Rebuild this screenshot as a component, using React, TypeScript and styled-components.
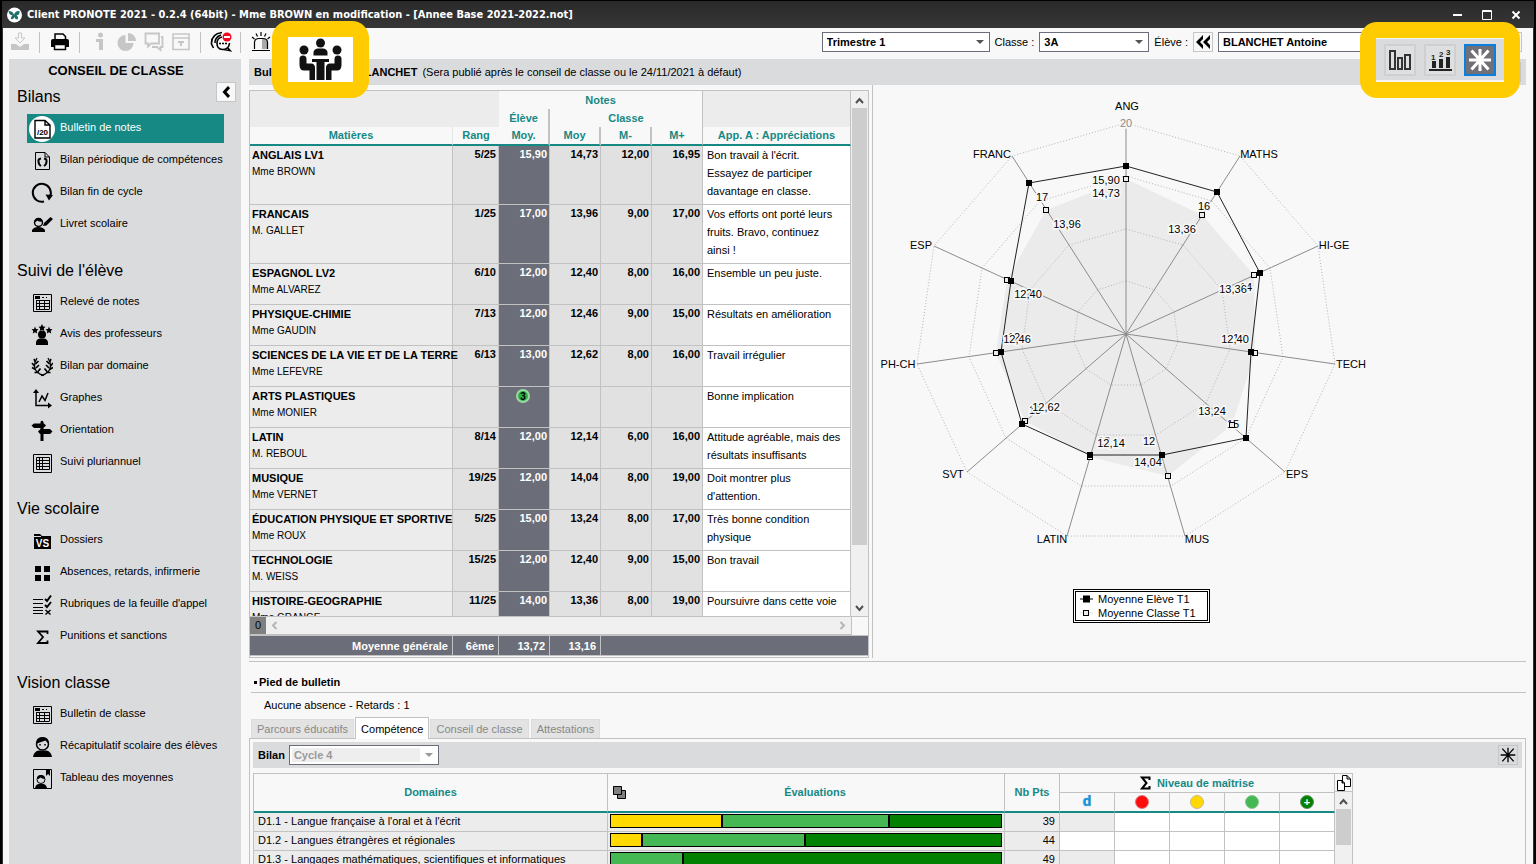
import React from 'react';
import styled, { createGlobalStyle, css } from 'styled-components';

const teal = '#168985';
const line = '#c2c2c2';
const panel = '#dadbdd';
const paper = '#f8f8f8';
const slate = '#6b6e78';

const GlobalStyle = createGlobalStyle`
  *, *::before, *::after { box-sizing: border-box; }
  html, body { margin: 0; height: 100%; overflow: hidden; }
  body {
    background: #000;
    color: #000;
    font-family: "Liberation Sans", Arial, sans-serif;
    font-size: 11px;
    line-height: 18px;
  }
  button, select { font: inherit; color: inherit; }
  svg { display: block; flex: none; }
`;

/* ---------- window frame ---------- */

const Window = styled.div`
  position: relative;
  display: flex;
  flex-direction: column;
  height: 100vh;
  border: solid #000;
  border-width: 1px 2px 0;
`;

const TitleBar = styled.header`
  display: flex;
  flex: none;
  align-items: center;
  justify-content: space-between;
  height: 27px;
  padding: 0 12px 0 5px;
  background: linear-gradient(#2a2a2a, #363636);
  color: #fff;
`;

const Title = styled.h1`
  display: flex;
  align-items: center;
  gap: 5px;
  margin: 0;
  font: bold 11px/18px "DejaVu Sans Condensed", "DejaVu Sans", sans-serif;
  white-space: nowrap;
`;

const WindowButtons = styled.div`
  display: flex;
  gap: 17px;
`;

const WindowButton = styled.button`
  padding: 0;
  border: 0;
  background: none;
`;

const Frame = styled.div`
  display: flex;
  flex: 1;
  flex-direction: column;
  min-height: 0;
  border: solid #333;
  border-width: 0 1px;
  background: ${paper};
`;

/* ---------- toolbar ---------- */

const Toolbar = styled.div`
  display: flex;
  flex: none;
  align-items: center;
  height: 31px;
  padding: 0 11px 3px 3px;
`;

const ToolButton = styled.button`
  display: flex;
  align-items: center;
  justify-content: center;
  width: 27px;
  height: 24px;
  padding: 0;
  border: 0;
  background: none;
  color: #000;
  &:disabled { color: #c6c6c6; }
`;

const ToolSeparator = styled.span`
  width: 1px;
  height: 21px;
  margin: 0 6px;
  background: #c2c2c2;
`;

const Filters = styled.div`
  display: flex;
  align-items: center;
  gap: 5px;
  margin-left: auto;
`;

const SelectBox = styled.span<{ $w: number; $disabled?: boolean }>`
  position: relative;
  display: block;
  width: ${p => p.$w}px;
  height: 20px;
  border: 1px solid ${slate};
  background: #fff;
  ${p => p.$disabled && css`padding: 2px;`}
  &::after {
    content: '';
    position: absolute;
    top: 7px;
    right: 5px;
    border: solid transparent;
    border-width: 4px 4px 0;
    border-top-color: ${p => (p.$disabled ? '#999' : '#555')};
  }
`;

const Select = styled.select`
  display: block;
  width: 100%;
  height: 100%;
  padding: 0 16px 0 4px;
  border: 0;
  background: none;
  font-weight: bold;
  line-height: 14px;
  appearance: none;
  &:disabled {
    width: calc(100% - 16px);
    padding-left: 2px;
    background: #eee;
    color: #999;
    opacity: 1;
  }
`;

const SmallButton = styled.button<{ $flat?: boolean }>`
  display: flex;
  flex: none;
  align-items: center;
  justify-content: center;
  width: 20px;
  height: 20px;
  padding: 0;
  border: 1px solid #c6c6c6;
  background: ${p => (p.$flat ? panel : paper)};
`;

/* ---------- sidebar ---------- */

const Main = styled.div`
  display: flex;
  flex: 1;
  gap: 8px;
  min-height: 0;
  padding: 0 7px 0 6px;
`;

const Sidebar = styled.nav`
  position: relative;
  flex: none;
  width: 232px;
  background: ${panel};
`;

const SidebarTitle = styled.h2`
  margin: 0 18px 0 0;
  font-size: 13px;
  line-height: 24px;
  text-align: center;
`;

const CollapseSlot = styled.div`
  position: absolute;
  top: 23px;
  right: 5px;
`;

const Section = styled.section`
  margin-bottom: 18px;
`;

const SectionTitle = styled.h3`
  margin: 0;
  padding-left: 8px;
  font-size: 16px;
  font-weight: normal;
  line-height: 28px;
`;

const NavItem = styled.a<{ $active?: boolean }>`
  display: flex;
  align-items: center;
  gap: 3px;
  width: 197px;
  height: 29px;
  margin: 3px 0 0 18px;
  color: ${p => (p.$active ? '#fff' : '#000')};
  background: ${p => (p.$active ? teal : 'transparent')};
  text-decoration: none;
  white-space: nowrap;
`;

const NavIcon = styled.span<{ $active?: boolean }>`
  display: flex;
  align-items: center;
  justify-content: center;
  width: 26px;
  height: 26px;
  margin: 0 2px;
  border-radius: 50%;
  color: #000;
  background: ${p => (p.$active ? '#fff' : 'transparent')};
`;

const NavLabel = styled.span`
  padding-bottom: 3px;
`;

/* ---------- content ---------- */

const Content = styled.main`
  display: flex;
  flex: 1;
  flex-direction: column;
  min-width: 0;
`;

const ContentHeader = styled.div`
  display: flex;
  flex: none;
  align-items: center;
  gap: 5px;
  height: 26px;
  padding: 0 5px;
  background: ${panel};
  white-space: nowrap;
`;

const PushRight = styled.span`
  margin-left: auto;
`;

const Split = styled.div`
  display: flex;
  flex: none;
  padding-bottom: 3px;
  border-bottom: 1px solid ${line};
`;

const GradesPane = styled.div`
  flex: none;
  width: 624px;
  padding: 5px 3px 0 0;
  border-right: 1px solid ${line};
`;

const GradesBox = styled.div`
  border: 1px solid ${line};
`;

const GradesScroll = styled.div`
  display: flex;
  height: 526px;
  overflow: hidden;
  border-bottom: 1px solid ${line};
`;

const Grid = styled.table`
  flex: none;
  align-self: flex-start;
  border-spacing: 0;
  table-layout: fixed;
  width: 0;
`;

const GroupHead = styled.th<{ $shade?: boolean; $rule?: boolean; $edge?: boolean }>`
  height: 18px;
  padding: 0;
  border-right: ${p => (p.$rule ? `2px solid ${line}` : p.$edge ? `1px solid ${line}` : '0')};
  background: ${p => (p.$shade ? '#ececec' : paper)};
  color: ${teal};
`;

const ColumnHead = styled.th<{ $rule?: 'soft' | 'hard' | 'thin' }>`
  height: 19px;
  padding: 0;
  border-bottom: 2px solid ${teal};
  border-right: ${p =>
    p.$rule === 'hard' ? `2px solid ${line}` : p.$rule === 'thin' ? `1px solid ${line}` : p.$rule === 'soft' ? '1px solid #e6e6e6' : '0'};
  background: ${paper};
  color: ${teal};
  line-height: 17px;
`;

const cell = css`
  border: solid ${line};
  border-width: 0 1px 1px 0;
  vertical-align: top;
`;

const SubjectCell = styled.td`
  ${cell}
  height: 41px;
  padding: 0 0 0 2px;
  background: #ececec;
  white-space: nowrap;
`;

const Subject = styled.strong`
  display: block;
`;

const Teacher = styled.span`
  display: block;
  font-size: 10px;
  line-height: 16px;
`;

const NumberCell = styled.td<{ $dark?: boolean }>`
  ${cell}
  padding: 0 2px 0 0;
  background: ${p => (p.$dark ? slate : '#e1e1e1')};
  color: ${p => (p.$dark ? '#fff' : '#000')};
  font-weight: bold;
  line-height: 17px;
  text-align: right;
`;

const Level = styled.span`
  display: block;
  width: 14px;
  height: 14px;
  margin: 2px auto 0;
  border: 2px solid #9ad8a2;
  border-radius: 50%;
  background: #2fae48;
  color: #000;
  font-size: 10px;
  line-height: 11px;
  text-align: center;
`;

const CommentCell = styled.td`
  ${cell}
  padding: 0 0 4px 4px;
  background: #fff;
  white-space: pre;
`;

const VScroll = styled.div<{ $thumb: number; $w: number }>`
  display: flex;
  flex-direction: column;
  align-items: center;
  width: ${p => p.$w}px;
  padding: 5px 1px 3px;
  background: #f0f0f0;
  &::before {
    content: '';
    order: 1;
    width: 15px;
    height: ${p => p.$thumb}px;
    margin: 3px 0 auto;
    background: #cdcdcd;
  }
  & > :last-child:not(:first-child) { order: 2; }
`;

const HScroll = styled.div`
  display: flex;
  align-items: center;
  width: 602px;
  height: 18px;
  padding-right: 4px;
  border: solid ${line};
  border-width: 0 1px 1px 0;
  background: #f0f0f0;
  color: #b4b4b4;
  & > :last-child { margin-left: auto; }
`;

const RowCount = styled.span`
  width: 16px;
  margin-right: 4px;
  background: #808080;
  color: #000;
  line-height: 17px;
  text-align: center;
`;

const Averages = styled.div`
  margin-bottom: 1px;
  border: solid ${line};
  border-width: 1px 0;
  background: ${slate};
`;

const AverageCell = styled.td`
  height: 19px;
  padding: 0 4px 0 0;
  border-right: 1px solid ${line};
  color: #fff;
  font-weight: bold;
  text-align: right;
`;

/* ---------- radar ---------- */

const Radar = styled.figure`
  flex: 1;
  min-width: 0;
  margin: 0;
`;

const RadarText = styled.text<{ $halo?: boolean; $muted?: boolean }>`
  font-size: 11px;
  fill: ${p => (p.$muted ? '#888' : '#000')};
  stroke: ${paper};
  stroke-width: ${p => (p.$halo ? 3 : 0)}px;
  paint-order: stroke;
  text-anchor: middle;
`;

const Legend = styled.figcaption`
  width: 137px;
  margin: 14px 0 0 200px;
  padding: 0 4px;
  border: 3px double #000;
  background: #fff;
  line-height: 14px;
`;

const LegendRow = styled.div`
  display: flex;
  align-items: center;
  gap: 5px;
`;

/* ---------- report footer ---------- */

const FooterTitle = styled.h2`
  display: flex;
  align-items: center;
  gap: 2px;
  margin: 11px 0 0 2px;
  padding-left: 3px;
  border-bottom: 1px solid ${line};
  font-size: 11px;
  line-height: 19px;
  &::before {
    content: '';
    width: 3px;
    height: 3px;
    background: #000;
  }
`;

const Absences = styled.p`
  margin: 3px 0 3px 15px;
`;

const Tabs = styled.div`
  display: flex;
  align-items: flex-end;
  gap: 2px;
  margin: 0 0 -1px 2px;
`;

const Tab = styled.button<{ $active?: boolean }>`
  position: relative;
  height: ${p => (p.$active ? 22 : 19)}px;
  margin: ${p => (p.$active ? '0 -1px' : '0 0 1px')};
  padding: 0 5px;
  border: 1px solid ${p => (p.$active ? line : '#dcdcdc')};
  border-bottom: 0;
  background: ${p => (p.$active ? '#fff' : '#e3e3e3')};
  color: ${p => (p.$active ? '#000' : '#888')};
`;

const TabPanel = styled.section`
  flex: 1;
  min-height: 0;
  overflow: hidden;
  padding: 3px;
  border: 1px solid ${line};
  border-bottom: 0;
`;

const CycleBar = styled.div`
  display: flex;
  align-items: center;
  gap: 4px;
  height: 26px;
  margin-bottom: 5px;
  padding: 0 4px 0 5px;
  background: ${panel};
`;

const SkillsBox = styled.div`
  display: flex;
  width: max-content;
  border: 1px solid ${line};
`;

const SkillHead = styled.th<{ $sub?: boolean; $group?: boolean }>`
  height: ${p => (p.$group ? 19 : p.$sub ? 20 : 39)}px;
  padding: 0;
  border: solid ${line};
  border-width: 0 1px 0 0;
  border-bottom: ${p => (p.$group ? `1px solid ${line}` : `2px solid ${teal}`)};
  color: ${teal};
  line-height: 17px;
`;

const HeadRow = styled.div<{ $gap?: number }>`
  display: flex;
  align-items: center;
  justify-content: center;
  gap: ${p => p.$gap ?? 0}px;
`;

const Grow = styled.span`
  flex: 1;
`;

const SkillCell = styled.td<{ $bg?: string; $right?: boolean }>`
  height: 19px;
  padding: 0 4px;
  border: solid ${line};
  border-width: 0 1px 1px 0;
  background: ${p => p.$bg ?? '#fff'};
  line-height: 16px;
  text-align: ${p => (p.$right ? 'right' : 'left')};
  vertical-align: top;
  white-space: nowrap;
`;

const BarCell = styled(SkillCell)`
  padding: 1px 2px;
`;

const Bar = styled.div`
  display: flex;
  gap: 2px;
  height: 14px;
  border: 1px solid #000;
  background: #000;
`;

const BarPart = styled.span<{ $color: string }>`
  background: ${p => p.$color};
`;

const Dot = styled.span<{ $color: string; $ring: string }>`
  display: block;
  width: 14px;
  height: 14px;
  margin: 0 auto;
  border: 1px solid ${p => p.$ring};
  border-radius: 50%;
  background: ${p => p.$color};
  color: #fff;
  line-height: 12px;
  text-align: center;
`;

const Dispensed = styled.span`
  color: #0b9ae6;
  font: bold 14px/16px "Liberation Sans", sans-serif;
  text-shadow: 0 0 1px #777;
`;

const SideColumn = styled.div`
  display: flex;
  flex-direction: column;
  background: #f0f0f0;
`;

const CopyButton = styled.button`
  display: flex;
  align-items: center;
  justify-content: center;
  width: 17px;
  height: 18px;
  padding: 0;
  border: 0;
  border-bottom: 1px solid ${line};
  background: ${paper};
`;

/* ---------- highlighted callouts ---------- */

const Callout = styled.div<{ $side: 'left' | 'right' }>`
  position: absolute;
  ${p => (p.$side === 'left' ? 'top: 20px; left: 270px;' : 'top: 21px; right: 14px;')}
  padding: 16px;
  border-radius: 17px;
  background: #ffcc02;
`;

const CalloutInner = styled.div<{ $gray?: boolean }>`
  display: flex;
  justify-content: center;
  gap: 8px;
  width: ${p => (p.$gray ? 128 : 65)}px;
  height: ${p => (p.$gray ? 44 : 45)}px;
  overflow: hidden;
  padding-top: ${p => (p.$gray ? 5 : 0)}px;
  background: ${p => (p.$gray ? panel : '#fff')};
  border-top: ${p => (p.$gray ? '1px solid #f4f4f4' : '0')};
  border-bottom: ${p => (p.$gray ? '2px solid #f4f4f4' : '0')};
`;

const ChartButton = styled.button<{ $active?: boolean }>`
  display: flex;
  flex: none;
  align-items: center;
  justify-content: center;
  width: 32px;
  height: 32px;
  padding: 0;
  border: ${p => (p.$active ? '2px solid #0a7fe0' : '2px solid #cfcfcf')};
  background: ${p => (p.$active ? '#707078' : '#dedfe0')};
`;

/* ---------- icons ---------- */

const Icon = ({ size = 22, children }: { size?: number; children: React.ReactNode }) => (
  <svg width={size} height={size} viewBox={`0 0 ${size} ${size}`} fill="none" stroke="currentColor" aria-hidden="true">
    {children}
  </svg>
);

const solid = { fill: 'currentColor', stroke: 'none' };

const DocOutline = () => <path d="M4.500 2.500H14L18.500 7V19.500H4.500zM14 2.500V7H18.500" />;

const navIcons: Record<string, React.ReactNode> = {
  marks: (
    <>
      <path strokeWidth="1.400" d="M4 2.500H14L19 7V20H4zM14 2.500V7H19" />
      <text x="11.500" y="16.500" fontSize="8" fontWeight="bold" textAnchor="middle" {...solid}>/20</text>
    </>
  ),
  skills: (
    <>
      <DocOutline />
      <path strokeWidth="2" d="M10 8.500Q7 9 7.500 11.500Q7.500 14.500 10 16M13 8.500Q16 9 15.500 11.500Q15.500 14.500 13 16" />
    </>
  ),
  cycle: (
    <>
      <path strokeWidth="2" d="M13 19.500A9 9 0 1 1 19 14.500" />
      <path d="M14.500 12.500L22 13L18 18.500z" {...solid} />
    </>
  ),
  booklet: (
    <>
      <circle cx="7.500" cy="8.500" r="4" strokeWidth="1.500" />
      <path d="M3.500 8Q4 4 8 4Q11 4 11.500 7.500Q7 8 6.500 6.500Q5 8 3.500 8zM1 18V16Q3 13 7 13Q12 13 14 16V18z" {...solid} />
      <path d="M12 12L13 9L19.500 3L22 5L15.500 11.500z" {...solid} />
    </>
  ),
  sheet: (
    <>
      <path d="M2.500 2.500H20.500V19.500H2.500zM5 8.500H18.500M5 11.500H18.500M5 14.500H18.500M5 17.500H18.500M5.500 8V17M8.500 8V17M13.500 8V17M18.500 8V17M11 5.500H13M15 5.500H16" />
      <path d="M4 4H9V7H4z" {...solid} />
    </>
  ),
  staff: (
    <>
      <circle cx="11" cy="10.500" r="4" {...solid} />
      <path d="M5 21V18Q6 14.500 9 14.500H13Q16 14.500 17 18V21zM11 0L12.200 2.500L14.500 2.800L12.800 4.500L13.300 7L11 5.800L8.700 7L9.200 4.500L7.500 2.800L9.800 2.500zM4 2.500L5 5L7.500 5.200L5.700 7L6.200 9.500L4 8.200L1.800 9.500L2.300 7L.500 5.200L3 5zM18 2.500L19 5L21.500 5.200L19.700 7L20.200 9.500L18 8.200L15.800 9.500L16.300 7L14.500 5.200L17 5z" {...solid} />
    </>
  ),
  laurel: (
    <>
      <path strokeWidth="1.300" d="M13 19.500Q3.500 17 3.500 10Q3.500 6 6 2M10 19.500Q19.500 17 19.500 10Q19.500 6 17 2" />
      <path strokeWidth="1.700" d="M1 7L3.500 10M1 11.500L4.500 13.500M3.500 16.500L7.500 16.500M3 3L4.500 6M7.500 5L4.500 8M8 9L5 12M9.500 12.500L7 15.500M22 7L19.500 10M22 11.500L18.500 13.500M19.500 16.500L15.500 16.500M20 3L18.500 6M15.500 5L18.500 8M15 9L18 12M13.500 12.500L16 15.500" />
    </>
  ),
  graph: (
    <>
      <path strokeWidth="1.500" d="M5 4V17.500H18M8 14L11 8L14 12.500L17 5" />
      <path d="M5 1L8 5H2zM21 17.500L17 14.500V20.500z" {...solid} />
    </>
  ),
  signpost: (
    <path d="M9.500 2Q11 -0.500 12.500 2V3.500H13L15 5.500L13 7.500H12.500V9H19L21.500 11.500L19 14H12.500V21H9.500V14H9L7 11.500L9.500 9V8H3L.500 5.500L3 3.500H9.500z" {...solid} />
  ),
  grid: (
    <path d="M2.500 2.500H20.500V20.500H2.500zM5.500 5.500H18.500V17.500H5.500zM5 8.500H18M5 11.500H18M5 14.500H18M8.500 5V17M11.500 5V17" />
  ),
  folder: (
    <>
      <path d="M3 4H9L11 6H20V19H3z" {...solid} />
      <path d="M3 6.500H10" stroke="#dadbdd" />
      <text x="11.500" y="17" fontSize="10" fontWeight="bold" textAnchor="middle" fill="#fff" stroke="none">VS</text>
    </>
  ),
  squares: <path d="M4 4H10V10H4zM13 4H19V10H13zM4 13H10V19H4zM13 13H19V19H13z" {...solid} />,
  checks: (
    <>
      <path d="M2 5.500H12M2 9.500H12M2 13.500H12M2 16.500H12M2 19.500H12" />
      <path strokeWidth="2" d="M14 5L16 7L20 1.500M14 11L16 13L20 8" />
      <path strokeWidth="1.500" d="M14.500 16L19.500 20.500M19.500 16L14.500 20.500" />
    </>
  ),
  sigma: <path strokeWidth="1.800" d="M16.500 8V5.500H7L12 11L7 17H16.500V14.500" />,
  pupil: (
    <>
      <circle cx="11.500" cy="8" r="6" strokeWidth="1.500" />
      <path d="M5 8Q5 1 11.500 1Q18 1 18 8Q16 6.500 14.500 4.500Q9 6 5 8zM2 21Q3 15 8 14.500H15Q20 15 21 21z" {...solid} />
      <path strokeWidth="1.500" d="M9 9.500V8M14 9.500V8" />
    </>
  ),
  portrait: (
    <>
      <path d="M2.500 1.500H20.500V20.500H2.500z" />
      <circle cx="10" cy="11.500" r="4" />
      <path d="M6 11Q6 7 10 7Q14 7 14 11Q10.500 10.500 9.500 9.500Q8 11 6 11zM4 20Q5 16 8 16H12Q15 16 16 20zM15 2H19V8L17 6L15 8z" {...solid} />
    </>
  ),
};

const Chevron = ({ dir }: { dir: 'up' | 'down' | 'left' | 'right' }) => {
  const d = { up: 'M1 7L4.500 3L8 7', down: 'M1 2L4.500 6L8 2', left: 'M6.500 1L3 4.500L6.500 8', right: 'M2.500 1L6 4.500L2.500 8' }[dir];
  return (
    <svg width="9" height="9" viewBox="0 0 9 9" fill="none" stroke={dir === 'up' || dir === 'down' ? '#505050' : '#b4b4b4'} strokeWidth="2" aria-hidden="true">
      <path d={d} />
    </svg>
  );
};

const Star = ({ size, width }: { size: number; width: number }) => (
  <svg width={size} height={size} viewBox="0 0 24 24" fill="none" stroke="currentColor" strokeWidth={width} aria-hidden="true">
    <path d="M12 1V23M1 12H23M3.500 2.500L20.500 21.500M20.500 2.500L3.500 21.500" />
  </svg>
);

const White = styled.span`
  color: #fff;
`;

const Sigma = () => (
  <svg width="11" height="14" viewBox="0 0 11 14" fill="none" stroke="#000" strokeWidth="2" aria-hidden="true">
    <path d="M9.500 4V1.500H2L6.500 7L2 12.500H9.500V10" />
  </svg>
);

/* ---------- data ---------- */

type Link = [icon: string, label: string];

const sections: { title: string; links: Link[] }[] = [
  {
    title: 'Bilans',
    links: [
      ['marks', 'Bulletin de notes'],
      ['skills', 'Bilan périodique de compétences'],
      ['cycle', 'Bilan fin de cycle'],
      ['booklet', 'Livret scolaire'],
    ],
  },
  {
    title: "Suivi de l'élève",
    links: [
      ['sheet', 'Relevé de notes'],
      ['staff', 'Avis des professeurs'],
      ['laurel', 'Bilan par domaine'],
      ['graph', 'Graphes'],
      ['signpost', 'Orientation'],
      ['grid', 'Suivi pluriannuel'],
    ],
  },
  {
    title: 'Vie scolaire',
    links: [
      ['folder', 'Dossiers'],
      ['squares', 'Absences, retards, infirmerie'],
      ['checks', "Rubriques de la feuille d'appel"],
      ['sigma', 'Punitions et sanctions'],
    ],
  },
  {
    title: 'Vision classe',
    links: [
      ['sheet', 'Bulletin de classe'],
      ['pupil', 'Récapitulatif scolaire des élèves'],
      ['portrait', 'Tableau des moyennes'],
    ],
  },
];

const grades: string[][] = [
  ['ANGLAIS LV1', 'Mme BROWN', '5/25', '15,90', '14,73', '12,00', '16,95', "Bon travail à l'écrit.\nEssayez de participer\ndavantage en classe."],
  ['FRANCAIS', 'M. GALLET', '1/25', '17,00', '13,96', '9,00', '17,00', 'Vos efforts ont porté leurs\nfruits. Bravo, continuez\nainsi !'],
  ['ESPAGNOL LV2', 'Mme ALVAREZ', '6/10', '12,00', '12,40', '8,00', '16,00', 'Ensemble un peu juste.'],
  ['PHYSIQUE-CHIMIE', 'Mme GAUDIN', '7/13', '12,00', '12,46', '9,00', '15,00', 'Résultats en amélioration'],
  ['SCIENCES DE LA VIE ET DE LA TERRE', 'Mme LEFEVRE', '6/13', '13,00', '12,62', '8,00', '16,00', 'Travail irrégulier'],
  ['ARTS PLASTIQUES', 'Mme MONIER', '', '', '', '', '', 'Bonne implication'],
  ['LATIN', 'M. REBOUL', '8/14', '12,00', '12,14', '6,00', '16,00', 'Attitude agréable, mais des\nrésultats insuffisants'],
  ['MUSIQUE', 'Mme VERNET', '19/25', '12,00', '14,04', '8,00', '19,00', "Doit montrer plus\nd'attention."],
  ['ÉDUCATION PHYSIQUE ET SPORTIVE', 'Mme ROUX', '5/25', '15,00', '13,24', '8,00', '17,00', 'Très bonne condition\nphysique'],
  ['TECHNOLOGIE', 'M. WEISS', '15/25', '12,00', '12,40', '9,00', '15,00', 'Bon travail'],
  ['HISTOIRE-GEOGRAPHIE', 'Mme GRANGE', '11/25', '14,00', '13,36', '8,00', '19,00', 'Poursuivre dans cette voie'],
];

const gradeColumns = [203, 46, 51, 51, 51, 51, 148];

type Point = [x: number, y: number];

interface Axis {
  name: string;
  at: Point;
  pupil: number;
  group: number;
  pupilText: string;
  pupilAt: Point;
  groupText: string;
  groupAt: Point;
}

const axis = (name: string, at: Point, pupil: number, pupilText: string, pupilAt: Point, group: number, groupText: string, groupAt: Point): Axis => ({
  name, at, pupil, pupilText, pupilAt, group, groupText, groupAt,
});

const axes: Axis[] = [
  axis('ANG', [254, 25], 15.9, '15,90', [233, 99], 14.73, '14,73', [233, 112]),
  axis('MATHS', [386, 73], 16, '16', [331, 125], 13.36, '13,36', [309, 148]),
  axis('HI-GE', [461, 164], 14, '14', [373, 206], 13.36, '13,36', [360, 208]),
  axis('TECH', [478, 283], 12, '12', [366, 257], 12.4, '12,40', [362, 258]),
  axis('EPS', [424, 393], 15, '15', [360, 343], 13.24, '13,24', [339, 330]),
  axis('MUS', [324, 458], 12, '12', [276, 360], 14.04, '14,04', [275, 381]),
  axis('LATIN', [179, 458], 12, '12', [231, 360], 12.14, '12,14', [238, 362]),
  axis('SVT', [80, 393], 13, '13', [162, 329], 12.62, '12,62', [173, 326]),
  axis('PH-CH', [25, 283], 12, '12', [141, 256], 12.46, '12,46', [144, 258]),
  axis('ESP', [48, 164], 12, '12', [153, 212], 12.4, '12,40', [155, 213]),
  axis('FRANC', [119, 73], 17, '17', [169, 116], 13.96, '13,96', [194, 143]),
];

const CENTER: Point = [253, 249];
const RADIUS = 211;

const polar = (i: number, value: number): Point => {
  const angle = (i * 2 * Math.PI) / axes.length;
  const r = (value / 20) * RADIUS;
  return [Math.round(CENTER[0] + r * Math.sin(angle)), Math.round(CENTER[1] - r * Math.cos(angle))];
};

const ring = (value: (a: Axis) => number) => axes.map((a, i) => polar(i, value(a)).join(',')).join(' ');

const yellow = '#ffd900';
const green = '#45b853';
const deep = '#028002';

const skills: { name: string; points: number; open: boolean; parts: [string, number][] }[] = [
  { name: "D1.1 - Langue française à l'oral et à l'écrit", points: 39, open: false, parts: [[yellow, 285], [green, 428], [deep, 287]] },
  { name: 'D1.2 - Langues étrangères et régionales', points: 44, open: true, parts: [[yellow, 78], [green, 416], [deep, 506]] },
  { name: 'D1.3 - Langages mathématiques, scientifiques et informatiques', points: 49, open: false, parts: [[green, 184], [deep, 816]] },
];

/* ---------- parts ---------- */

const Columns = ({ widths }: { widths: number[] }) => (
  <colgroup>
    {widths.map((w, i) => <col key={i} width={w} />)}
  </colgroup>
);

const Picker = ({ label, value, width, id }: { label?: string; value: string; width: number; id: string }) => (
  <>
    {label && <label htmlFor={id}>{label}</label>}
    <SelectBox $w={width}>
      <Select id={id} aria-label={label ? undefined : 'Période'} defaultValue={value}>
        <option>{value}</option>
      </Select>
    </SelectBox>
  </>
);

const MainToolbar = () => (
  <Toolbar>
    <ToolButton disabled aria-label="Enregistrer">
      <Icon size={20}>
        <path d="M8.500 1H11.500V6H15L10 11L5 6H8.500z" />
        <path d="M1 12H6L10 15L14 12H19V18H1z" {...solid} />
      </Icon>
    </ToolButton>
    <ToolSeparator />
    <ToolButton aria-label="Imprimer">
      <Icon size={20}>
        <path d="M1 9Q1 7 3 7H17Q19 7 19 9V15H16V12H4V15H1z" {...solid} />
        <path strokeWidth="1.500" d="M5 7V2H13L15.500 4.500V7M4.500 12.500H15.500V17.500H4.500z" />
      </Icon>
    </ToolButton>
    <ToolSeparator />
    <ToolButton disabled aria-label="Informations">
      <Icon size={20}>
        <circle cx="10.500" cy="3" r="2.500" {...solid} />
        <path d="M6 7H13V18H9V10H6z" {...solid} />
      </Icon>
    </ToolButton>
    <ToolButton disabled aria-label="Statistiques">
      <Icon size={20}>
        <path d="M8.500 3V11H16.500A8 8 0 1 1 8.500 3zM11 1A8 8 0 0 1 19 9H11z" {...solid} />
      </Icon>
    </ToolButton>
    <ToolButton disabled aria-label="Discussions">
      <Icon size={20}>
        <path strokeWidth="1.800" d="M1.500 1.500H15V11.500H7L4 14.500V11.500H1.500zM17 5H18.500V15H16.500V18L13 15H8" />
      </Icon>
    </ToolButton>
    <ToolButton disabled aria-label="Archives">
      <Icon size={20}>
        <path strokeWidth="1.600" d="M2 2H18V17.500H2zM2 6H18" />
        <path d="M7 9H13V11H11V14H9V11H7z" {...solid} />
      </Icon>
    </ToolButton>
    <ToolSeparator />
    <ToolButton aria-label="Messagerie">
      <Icon size={22}>
        <path strokeWidth="1.600" d="M12 1.500Q1 3 1.500 13L3.500 17M11 4Q5 6 5 12M19.500 12Q19 18.500 12.500 18.500Q7 18 7 12.500Q7 7 12 6M17 16L20 19.500L14 18.500" />
        <path strokeWidth="1.500" strokeDasharray="2 1" d="M9 12.500H17" />
        <circle cx="17" cy="6" r="4.500" fill="#f00a1e" stroke="none" />
        <path stroke="#fff" strokeWidth="2" d="M14 6H20" />
      </Icon>
    </ToolButton>
    <ToolSeparator />
    <ToolButton aria-label="Alerte">
      <Icon size={20}>
        <path d="M11 7H14Q16 8 16 10V17H11z" fill="#aaa" stroke="none" />
        <path strokeWidth="1.200" d="M3.500 17V10Q4 6.500 8 6.500H12Q16 6.500 16.500 10V17M1 18.500H19M1 5L3.500 7M5 1.500L6.500 4.500M10 0V4M15 1.500L13.500 4.500M19 5L16.500 7" />
      </Icon>
    </ToolButton>
    <Filters>
      <Picker id="term" value="Trimestre 1" width={168} />
      <Picker id="class" label="Classe :" value="3A" width={110} />
      <label htmlFor="pupil">Élève :</label>
      <SmallButton aria-label="Élève précédent">
        <svg width="16" height="14" viewBox="0 0 16 14" aria-hidden="true">
          <path d="M8 0V4L5 7L8 10V14L1 7zM15 0V4L12 7L15 10V14L8 7z" />
        </svg>
      </SmallButton>
      <SelectBox $w={279}>
        <Select id="pupil" defaultValue="BLANCHET Antoine">
          <option>BLANCHET Antoine</option>
        </Select>
      </SelectBox>
      <SmallButton aria-label="Élève suivant" />
    </Filters>
  </Toolbar>
);

const SideNav = () => (
  <Sidebar>
    <SidebarTitle>CONSEIL DE CLASSE</SidebarTitle>
    <CollapseSlot>
      <SmallButton aria-label="Réduire">
        <svg width="8" height="12" viewBox="0 0 8 12" fill="none" stroke="#000" strokeWidth="3" aria-hidden="true">
          <path d="M7 1L2.500 6L7 11" />
        </svg>
      </SmallButton>
    </CollapseSlot>
    {sections.map(section => (
      <Section key={section.title}>
        <SectionTitle>{section.title}</SectionTitle>
        {section.links.map(([icon, label]) => {
          const active = icon === 'marks';
          return (
            <NavItem key={label} href="#" $active={active}>
              <NavIcon $active={active}><Icon>{navIcons[icon]}</Icon></NavIcon>
              <NavLabel>{label}</NavLabel>
            </NavItem>
          );
        })}
      </Section>
    ))}
  </Sidebar>
);

const Grades = () => (
  <GradesPane>
    <GradesBox>
      <GradesScroll>
        <Grid>
          <Columns widths={gradeColumns} />
          <thead>
            <tr>
              <GroupHead colSpan={2} rowSpan={2} $shade />
              <GroupHead colSpan={4} $edge>Notes</GroupHead>
              <GroupHead rowSpan={2} $shade $edge />
            </tr>
            <tr>
              <GroupHead $rule>Élève</GroupHead>
              <GroupHead colSpan={3} $edge>Classe</GroupHead>
            </tr>
            <tr>
              <ColumnHead $rule="soft">Matières</ColumnHead>
              <ColumnHead>Rang</ColumnHead>
              <ColumnHead $rule="hard">Moy.</ColumnHead>
              <ColumnHead $rule="hard">Moy</ColumnHead>
              <ColumnHead $rule="hard">M-</ColumnHead>
              <ColumnHead $rule="thin">M+</ColumnHead>
              <ColumnHead $rule="thin">App. A : Appréciations</ColumnHead>
            </tr>
          </thead>
          <tbody>
            {grades.map(([subject, teacher, rank, pupil, mean, min, max, comment]) => (
              <tr key={subject}>
                <SubjectCell>
                  <Subject>{subject}</Subject>
                  <Teacher>{teacher}</Teacher>
                </SubjectCell>
                <NumberCell>{rank}</NumberCell>
                <NumberCell $dark>{pupil || <Level>3</Level>}</NumberCell>
                <NumberCell>{mean}</NumberCell>
                <NumberCell>{min}</NumberCell>
                <NumberCell>{max}</NumberCell>
                <CommentCell>{comment}</CommentCell>
              </tr>
            ))}
          </tbody>
        </Grid>
        <VScroll $thumb={437} $w={17}>
          <Chevron dir="up" />
          <Chevron dir="down" />
        </VScroll>
      </GradesScroll>
      <HScroll>
        <RowCount>0</RowCount>
        <Chevron dir="left" />
        <Chevron dir="right" />
      </HScroll>
      <Averages>
        <Grid>
          <Columns widths={[203, 46, 51, 51]} />
          <tbody>
            <tr>
              <AverageCell>Moyenne générale</AverageCell>
              <AverageCell>6ème</AverageCell>
              <AverageCell>13,72</AverageCell>
              <AverageCell>13,16</AverageCell>
            </tr>
          </tbody>
        </Grid>
      </Averages>
    </GradesBox>
  </GradesPane>
);

const RadarChart = () => (
  <Radar>
    <svg width="520" height="490" viewBox="0 0 520 490" role="img" aria-label="Moyennes par matière">
      <polygon points={ring(a => a.group)} fill="#ebebeb" />
      {[5, 10, 15, 20].map(v => (
        <polygon key={v} points={ring(() => v)} fill="none" stroke="#b4b4b4" strokeDasharray="1 2" />
      ))}
      {axes.map((a, i) => {
        const [x, y] = polar(i, 20);
        return <line key={a.name} x1={CENTER[0]} y1={CENTER[1]} x2={x} y2={y} stroke="#8c8c8c" />;
      })}
      <polygon points={ring(a => a.pupil)} fill="none" stroke="#222" />
      <RadarText x={CENTER[0]} y="42" $halo $muted>20</RadarText>
      {axes.map(a => (
        <g key={a.name}>
          <RadarText x={a.at[0]} y={a.at[1]}>{a.name}</RadarText>
          <RadarText x={a.pupilAt[0]} y={a.pupilAt[1]} $halo>{a.pupilText}</RadarText>
          <RadarText x={a.groupAt[0]} y={a.groupAt[1]} $halo>{a.groupText}</RadarText>
        </g>
      ))}
      {axes.map((a, i) => {
        const [gx, gy] = polar(i, a.group);
        const [px, py] = polar(i, a.pupil);
        return (
          <g key={a.name}>
            <rect x={gx - 2.5} y={gy - 2.5} width="5" height="5" fill="#ebebeb" stroke="#000" />
            <rect x={px - 3} y={py - 3} width="6" height="6" />
          </g>
        );
      })}
    </svg>
    <Legend>
      <LegendRow>
        <svg width="13" height="8" viewBox="0 0 13 8" aria-hidden="true">
          <path d="M0 3.500H13V4.500H0zM3 0.500H10V7.500H3z" />
        </svg>
        Moyenne Elève T1
      </LegendRow>
      <LegendRow>
        <svg width="13" height="8" viewBox="0 0 13 8" aria-hidden="true">
          <path d="M0 4H13" stroke="#ddd" />
          <rect x="3.500" y="1.500" width="5" height="5" fill="#ebebeb" stroke="#000" />
        </svg>
        Moyenne Classe T1
      </LegendRow>
    </Legend>
  </Radar>
);

const Skills = () => (
  <SkillsBox>
    <Grid>
      <Columns widths={[354, 397, 55, 55, 55, 55, 55, 55]} />
      <thead>
        <tr>
          <SkillHead rowSpan={2}>Domaines</SkillHead>
          <SkillHead rowSpan={2}>
            <HeadRow>
              <svg width="18" height="13" viewBox="0 0 18 13" fill="#808080" stroke="#000" aria-hidden="true">
                <path d="M9.500 4.500H17.500V12.500H9.500z" />
                <path d="M5.500 0.500H13.500V8.500H5.500z" />
              </svg>
              <Grow>Évaluations</Grow>
            </HeadRow>
          </SkillHead>
          <SkillHead rowSpan={2}>Nb Pts</SkillHead>
          <SkillHead colSpan={5} $group>
            <HeadRow $gap={6}>
              <Sigma />
              <span>Niveau de maîtrise</span>
            </HeadRow>
          </SkillHead>
        </tr>
        <tr>
          <SkillHead $sub><Dispensed>d</Dispensed></SkillHead>
          <SkillHead $sub><Dot $color="#ff0d0d" $ring="#d98080" /></SkillHead>
          <SkillHead $sub><Dot $color={yellow} $ring="#cdb98a" /></SkillHead>
          <SkillHead $sub><Dot $color={green} $ring="#8cc794" /></SkillHead>
          <SkillHead $sub><Dot $color={deep} $ring="#5f8f5f">+</Dot></SkillHead>
        </tr>
      </thead>
      <tbody>
        {skills.map(skill => (
          <tr key={skill.name}>
            <SkillCell $bg="#ececec">{skill.name}</SkillCell>
            <BarCell $bg="#ececec">
              <Bar>
                {skill.parts.map(([color, share]) => (
                  <BarPart key={color} $color={color} style={{ flexGrow: share }} />
                ))}
              </Bar>
            </BarCell>
            <SkillCell $bg="#ececec" $right>{skill.points}</SkillCell>
            <SkillCell $bg={skill.open ? '#fff' : '#ececec'} />
            <SkillCell />
            <SkillCell />
            <SkillCell />
            <SkillCell />
          </tr>
        ))}
      </tbody>
    </Grid>
    <SideColumn>
      <CopyButton aria-label="Copier">
        <svg width="14" height="16" viewBox="0 0 14 16" fill="#fff" stroke="#000" aria-hidden="true">
          <path d="M5.500 0.500H10L13.500 4V11.500H5.500zM10 0.500V4H13.500" />
          <path d="M0.500 5.500H5L7.500 8V15.500H0.500zM5 5.500V8H7.500" />
        </svg>
      </CopyButton>
      <VScroll $thumb={36} $w={17}>
        <Chevron dir="up" />
      </VScroll>
    </SideColumn>
  </SkillsBox>
);

const MeetingIcon = () => (
  <svg width="48" height="45" viewBox="0 0 48 45" fill="#111" aria-hidden="true">
    <circle cx="7" cy="13" r="4.500" />
    <circle cx="23.500" cy="6" r="4.500" />
    <circle cx="40" cy="13" r="4.500" />
    <path d="M16.500 18.500V15Q17.500 11.500 21 11.500H26Q29.500 11.500 30.500 15V18.500z" />
    <path d="M15 22H32V25H27.500V43H19.500V25H15z" />
    <path d="M2.500 22Q2.500 18.500 6 18.500Q9.500 18.500 9.500 22V26.500H14Q18 26.500 18 31V43H12.500V33.500H7Q2.500 33.500 2.500 28zM44.500 22Q44.500 18.500 41 18.500Q37.500 18.500 37.500 22V26.500H33Q29 26.500 29 31V43H34.500V33.500H40Q44.500 33.500 44.500 28z" />
  </svg>
);

export default function App() {
  return (
    <>
      <GlobalStyle />
      <Window>
        <TitleBar>
          <Title>
            <svg width="15" height="16" viewBox="0 0 15 16" aria-hidden="true">
              <circle cx="7.500" cy="8" r="7.500" fill="#fff" />
              <path d="M1.500 4Q6 4 7 8Q8 3.500 12.500 4Q13 8 9.500 8.500Q12 10 10.500 12.500Q8 12.500 7.500 10Q6 13 4 12Q3.500 9.500 5.500 8.500Q2 8 1.500 4z" fill="#1d6f68" />
            </svg>
            Client PRONOTE 2021 - 0.2.4 (64bit) - Mme BROWN en modification - [Annee Base 2021-2022.not]
          </Title>
          <WindowButtons>
            <WindowButton aria-label="Réduire">
              <Icon size={12}><path stroke="#fff" strokeWidth="2" d="M1 6H10" /></Icon>
            </WindowButton>
            <WindowButton aria-label="Agrandir">
              <Icon size={12}><path stroke="#fff" d="M1.500 1.500H10.500V10.500H1.500zM1 2.500H11" /></Icon>
            </WindowButton>
            <WindowButton aria-label="Fermer">
              <Icon size={12}><path stroke="#fff" strokeWidth="2" d="M2.500 2.500L9.500 9.500M9.500 2.500L2.500 9.500" /></Icon>
            </WindowButton>
          </WindowButtons>
        </TitleBar>
        <Frame>
          <MainToolbar />
          <Main>
            <SideNav />
            <Content>
              <ContentHeader>
                <strong>Bulletin de Antoine BLANCHET</strong>
                <span>(Sera publié après le conseil de classe ou le 24/11/2021 à défaut)</span>
                <PushRight><SmallButton aria-label="Options" $flat /></PushRight>
              </ContentHeader>
              <Split>
                <Grades />
                <RadarChart />
              </Split>
              <FooterTitle>Pied de bulletin</FooterTitle>
              <Absences>Aucune absence - Retards : 1</Absences>
              <Tabs role="tablist">
                <Tab role="tab">Parcours éducatifs</Tab>
                <Tab role="tab" $active aria-selected="true">Compétence</Tab>
                <Tab role="tab">Conseil de classe</Tab>
                <Tab role="tab">Attestations</Tab>
              </Tabs>
              <TabPanel role="tabpanel">
                <CycleBar>
                  <strong><label htmlFor="cycle">Bilan</label></strong>
                  <SelectBox $w={150} $disabled>
                    <Select id="cycle" disabled defaultValue="Cycle 4">
                      <option>Cycle 4</option>
                    </Select>
                  </SelectBox>
                  <PushRight>
                    <SmallButton aria-label="Afficher le graphe" $flat>
                      <Star size={16} width={2} />
                    </SmallButton>
                  </PushRight>
                </CycleBar>
                <Skills />
              </TabPanel>
            </Content>
          </Main>
        </Frame>
        <Callout $side="left">
          <CalloutInner><MeetingIcon /></CalloutInner>
        </Callout>
        <Callout $side="right">
          <CalloutInner $gray>
            <ChartButton aria-label="Histogramme">
              <svg width="22" height="20" viewBox="0 0 22 20" fill="none" stroke="#333" strokeWidth="2" aria-hidden="true">
                <path d="M1 1H6V19H1zM9 8H13V19H9zM16 5H21V19H16z" />
              </svg>
            </ChartButton>
            <ChartButton aria-label="Classement">
              <svg width="23" height="22" viewBox="0 0 23 22" fill="#222" aria-hidden="true">
                <path d="M3 12H7V19H3zM10 10H14V19H10zM17 8H21V19H17zM0 20H23V22H0z" />
                <text x="2" y="11" fontSize="8" fontWeight="bold">1</text>
                <text x="10" y="8" fontSize="8" fontWeight="bold">2</text>
                <text x="17" y="6" fontSize="8" fontWeight="bold">3</text>
              </svg>
            </ChartButton>
            <ChartButton $active aria-label="Radar">
              <White><Star size={24} width={3} /></White>
            </ChartButton>
          </CalloutInner>
        </Callout>
      </Window>
    </>
  );
}
